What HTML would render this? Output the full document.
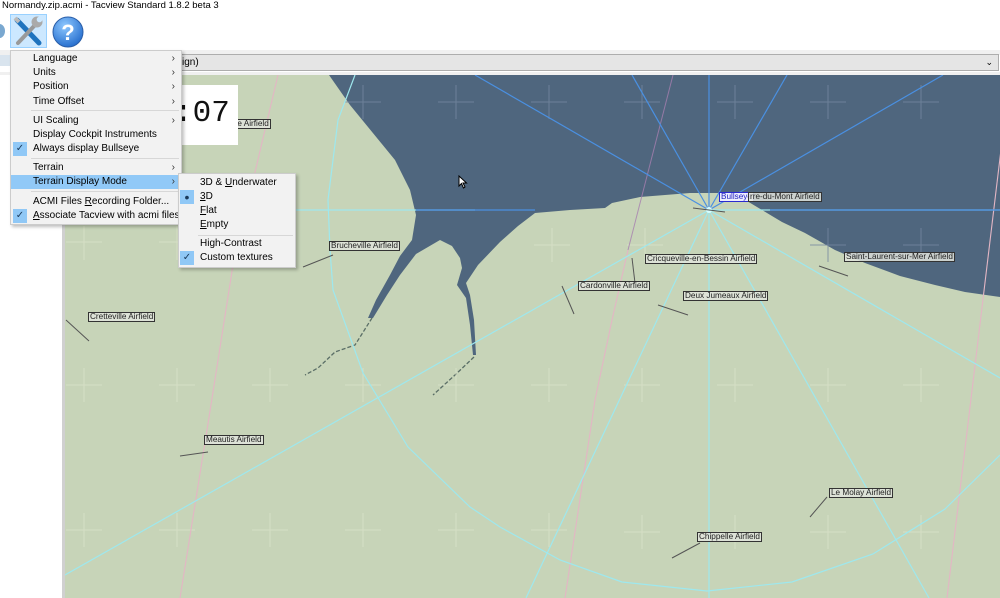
<!DOCTYPE html>
<html><head><meta charset="utf-8"><style>
*{margin:0;padding:0;box-sizing:border-box}
body{width:1000px;height:598px;overflow:hidden;background:#fff;font-family:"Liberation Sans",sans-serif;position:relative}
.abs{position:absolute}
.menu{position:absolute;background:#f2f2f2;border:1px solid #ccc;box-shadow:2px 2px 3px rgba(0,0,0,.25);font-size:10px;color:#000;white-space:nowrap}
.it{position:absolute;left:0;right:0;height:14px;line-height:14px}
.it span{position:absolute}
.arr{position:absolute;right:6px;font-size:10px;color:#333}
.sep{position:absolute;height:1px;background:#d7d7d7}
.chk{position:absolute;width:14px;height:14px;background:#90c8f6;color:#1a3a5a;font-size:10px;text-align:center;line-height:14px}
.lbl{position:absolute;font-size:8.2px;line-height:8px;padding:0 1px;border:1px solid #333;background:rgba(225,228,220,.85);color:#222;white-space:nowrap;height:10px}
</style></head><body>
<div class="abs" style="left:2px;top:0;font-size:9.5px;color:#000;line-height:12px">Normandy.zip.acmi - Tacview Standard 1.8.2 beta 3</div>
<div class="abs" style="left:-6px;top:24px;width:11px;height:14px;background:#7aa8d0;border-radius:50%"></div>
<div class="abs" style="left:10px;top:14px;width:37px;height:34px;background:#cce8ff;border:1px solid #99d1ff"></div>
<svg class="abs" style="left:10px;top:14px" width="37" height="34" viewBox="0 0 37 34">
<path d="M7 6 L29 29" stroke="#1e73be" stroke-width="5" stroke-linecap="round"/>
<path d="M5 4 L9 8" stroke="#bbb" stroke-width="4"/>
<path d="M8 29 L26 10" stroke="#999" stroke-width="4" stroke-linecap="round"/>
<circle cx="27" cy="8" r="5.5" fill="#aaa"/><circle cx="29.5" cy="5.5" r="2.8" fill="#cce8ff"/>
</svg>
<svg class="abs" style="left:52px;top:16px" width="32" height="32"><defs><radialGradient id="g" cx=".4" cy=".3" r=".8"><stop offset="0" stop-color="#8ec8ff"/><stop offset="1" stop-color="#1a64c8"/></radialGradient></defs>
<circle cx="16" cy="16" r="15" fill="url(#g)" stroke="#2a5ea8"/><text x="16" y="24" text-anchor="middle" font-size="22" font-weight="bold" fill="#fff" font-family="Liberation Sans">?</text></svg>
<div class="abs" style="left:0;top:50px;width:1000px;height:5px;background:#f0f0f0"></div>
<div class="abs" style="left:0;top:55px;width:64px;height:11px;background:#d9e4ee"></div>
<div class="abs" style="left:64px;top:54px;width:935px;height:17px;background:#e5e5e5;border:1px solid #adadad;font-size:10px;line-height:15px;padding-left:112px">sign)<span style="position:absolute;right:5px;font-size:9px">&#8964;</span></div>
<div class="abs" style="left:0;top:72px;width:1000px;height:3px;background:#f0f0f0"></div>
<div class="abs" style="left:62px;top:75px;width:3px;height:523px;background:#d0d0d0"></div>
<svg class="abs" style="left:65px;top:75px" width="935" height="523" viewBox="65 75 935 523">
<rect x="65" y="75" width="935" height="523" fill="#c7d4b8"/>
<path d="M329 75 L350 105 L395 160 L410 190 L416 215 L412 240 L400 256 L390 275 L376 300 L368 318 L373 318 L387 295 L400 275 L416 254 L440 240 L452 246 L460 258 L462 268 L457 285 L466 298 L470 325 L473 355 L476 355 L474 320 L470 295 L466 283 L478 265 L500 242 L518 226 L535 213 L570 210 L605 208 L612 203 L640 197 L665 195 L690 193 L725 193 L742 198 L762 210 L782 222 L805 233 L835 250 L865 263 L900 276 L935 285 L965 292 L1000 297 L1000 75 Z" fill="#4f667e"/>
<g stroke="#5a6e66" stroke-width="1.3" stroke-dasharray="4 2" fill="none"><path d="M372 318 L355 345 L335 352 L318 368 L305 375"/><path d="M474 357 L455 375 L433 395"/></g>
<g stroke="#dde4cc" stroke-width="1" opacity=".7">
<path d="M66 242h36M84 226v34M66 385h36M84 368v34M66 530h36M84 513v34M159 242h36M177 226v34M159 385h36M177 368v34M159 530h36M177 513v34M252 385h36M270 368v34M252 530h36M270 513v34M345 385h36M363 368v34M345 530h36M363 513v34M438 385h36M456 368v34M438 530h36M456 513v34M531 385h36M549 368v34M531 530h36M549 513v34M624 385h36M642 368v34M624 532h36M642 515v34M717 385h36M735 368v34M717 532h36M735 515v34M810 385h36M828 368v34M810 532h36M828 515v34M903 385h36M921 368v34M903 532h36M921 515v34M534 245h36M552 228v34M627 245h36M645 228v34M252 242h36M270 226v34"/>
</g>
<g stroke="#7487a0" stroke-width="1" opacity=".8">
<path d="M345 102h36M363 85v34M438 102h36M456 85v34M531 102h36M549 85v34M624 102h36M642 85v34M717 102h36M735 85v34M810 102h36M828 85v34M903 102h36M921 85v34M810 245h36M828 228v34M903 245h36M921 228v34"/>
</g>
<g stroke="#e3b6c4" stroke-width="1.1" fill="none"><path d="M278 75 L233 265 L207 430 L180 598"/><path d="M628 250 L612 320 L595 400 L565 598"/><path d="M1010 75 L947 598"/></g>
<path d="M673 75 L628 250" stroke="#a77fb0" stroke-width="1" opacity=".8"/>
<g stroke="#9ee8ee" stroke-width="1.2" fill="none">
<path d="M355 75 L338 120 L328 200 L330 250 L333 290 L363 373 L408 447 L470 507 L500 527 L560 560 L622 582 L707 591 L792 582 L873 554 L945 509 L1000 455"/>
<path d="M65 210 L475 210"/><path d="M709 210 L1000 210"/>
<path d="M709 210 L65 575"/><path d="M709 210 L526 598"/><path d="M709 210 L709 598"/><path d="M709 210 L929 598"/><path d="M709 210 L1000 378"/>
</g>
<g stroke="#4a90e2" stroke-width="1.2" fill="none">
<path d="M416 210 L535 210"/><path d="M770 210 L1000 210"/>
<path d="M709 210 L709 75"/><path d="M709 210 L475 75"/><path d="M709 210 L632 75"/><path d="M709 210 L787 75"/><path d="M709 210 L943 75"/>
</g>
<circle cx="709" cy="210" r="3" fill="#d8ffff"/>
<g stroke="#555" stroke-width="1"><path d="M303 267 L333 255"/><path d="M66 320 L89 341"/><path d="M180 456 L208 452"/><path d="M562 286 L574 314"/><path d="M632 258 L635 283"/><path d="M658 305 L688 315"/><path d="M819 266 L848 276"/><path d="M810 517 L827 497"/><path d="M672 558 L700 543"/><path d="M693 208 L725 212"/></g>
</svg>
<div class="lbl" style="left:214px;top:119px">rueville Airfield</div>
<div class="abs" style="left:172px;top:85px;width:66px;height:60px;background:#fff"></div>
<div class="abs" style="left:174px;top:96px;font-family:'Liberation Mono',monospace;font-size:31px;line-height:36px;color:#111">:07</div>
<div class="lbl" style="left:719px;top:192px;border-color:#2a2ad0;color:#2020c0;background:#eef">Bullseye</div>
<div class="lbl" style="left:748px;top:192px">rre-du-Mont Airfield</div>
<div class="lbl" style="left:844px;top:252px">Saint-Laurent-sur-Mer Airfield</div>
<div class="lbl" style="left:645px;top:254px">Cricqueville-en-Bessin Airfield</div>
<div class="lbl" style="left:578px;top:281px">Cardonville Airfield</div>
<div class="lbl" style="left:683px;top:291px">Deux Jumeaux Airfield</div>
<div class="lbl" style="left:329px;top:241px">Brucheville Airfield</div>
<div class="lbl" style="left:88px;top:312px">Cretteville Airfield</div>
<div class="lbl" style="left:204px;top:435px">Meautis Airfield</div>
<div class="lbl" style="left:829px;top:488px">Le Molay Airfield</div>
<div class="lbl" style="left:697px;top:532px">Chippelle Airfield</div>
<svg class="abs" style="left:458px;top:175px" width="10" height="14"><path d="M1 1 L1 11 L3.5 8.5 L5.5 13 L7 12 L5 8 L8.5 8 Z" fill="#fff" stroke="#000" stroke-width="1"/></svg>

<div class="menu" style="left:10px;top:50px;width:172px;height:175px">
<div class="it" style="top:1px"><span style="left:22px">Language</span><span class="arr">&#8250;</span></div>
<div class="it" style="top:15px"><span style="left:22px">Units</span><span class="arr">&#8250;</span></div>
<div class="it" style="top:29px"><span style="left:22px">Position</span><span class="arr">&#8250;</span></div>
<div class="it" style="top:44px"><span style="left:22px">Time Offset</span><span class="arr">&#8250;</span></div>
<div class="sep" style="top:59px;left:20px;right:2px"></div>
<div class="it" style="top:63px"><span style="left:22px">UI Scaling</span><span class="arr">&#8250;</span></div>
<div class="it" style="top:77px"><span style="left:22px">Display Cockpit Instruments</span></div>
<div class="chk" style="left:2px;top:91px">&#10003;</div>
<div class="it" style="top:91px"><span style="left:22px">Always display Bullseye</span></div>
<div class="sep" style="top:107px;left:20px;right:2px"></div>
<div class="it" style="top:110px"><span style="left:22px">Terrain</span><span class="arr">&#8250;</span></div>
<div class="it" style="top:124px;background:#91c9f7"><span style="left:22px">Terrain Display Mode</span><span class="arr">&#8250;</span></div>
<div class="sep" style="top:140px;left:20px;right:2px"></div>
<div class="it" style="top:144px"><span style="left:22px">ACMI Files <u>R</u>ecording Folder...</span></div>
<div class="chk" style="left:2px;top:158px">&#10003;</div>
<div class="it" style="top:158px"><span style="left:22px"><u>A</u>ssociate Tacview with acmi files</span></div>
</div>
<div class="menu" style="left:178px;top:173px;width:118px;height:95px">
<div class="it" style="top:2px"><span style="left:21px">3D &amp; <u>U</u>nderwater</span></div>
<div class="chk" style="left:1px;top:16px;font-size:14px">&#8226;</div>
<div class="it" style="top:16px"><span style="left:21px"><u>3</u>D</span></div>
<div class="it" style="top:30px"><span style="left:21px"><u>F</u>lat</span></div>
<div class="it" style="top:44px"><span style="left:21px"><u>E</u>mpty</span></div>
<div class="sep" style="top:61px;left:19px;right:2px"></div>
<div class="it" style="top:63px"><span style="left:21px">High-Contrast</span></div>
<div class="chk" style="left:1px;top:77px">&#10003;</div>
<div class="it" style="top:77px"><span style="left:21px">Custom textures</span></div>
</div>
</body></html>
